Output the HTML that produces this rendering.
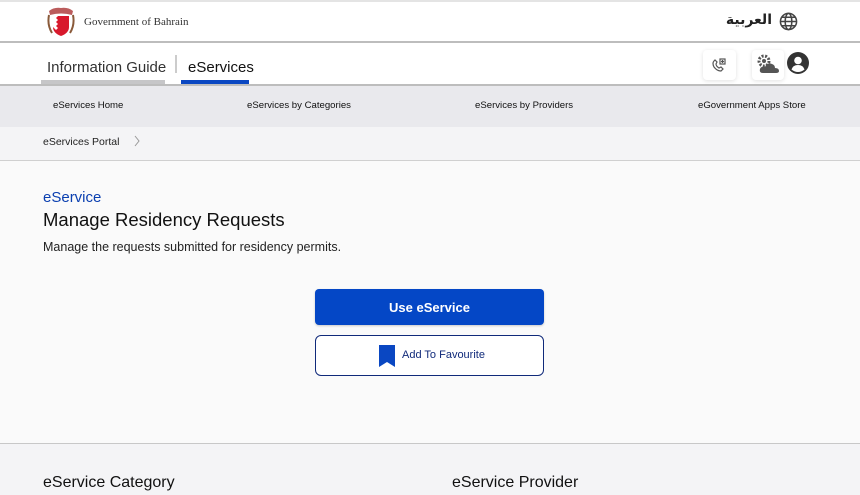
<!DOCTYPE html>
<html><head><meta charset="utf-8"><style>
*{margin:0;padding:0;box-sizing:border-box}
body{width:860px;height:495px;overflow:hidden;font-family:"Liberation Sans",sans-serif;background:#fafafa;position:relative;color:#111}
.a{position:absolute;white-space:nowrap}
</style></head><body>
<div class="a" style="left:0;top:0;width:860px;height:43px;background:#fff;border-top:2px solid #e4e4e4;border-bottom:2px solid #bdbdbd"></div>
<svg class="a" style="left:46px;top:5px" width="30" height="33" viewBox="0 0 30 33">
<path d="M3 6 Q8 2 15 3 Q22 2 27 6 L26 10 Q15 7 4 10Z" fill="#a33" opacity=".8"/>
<path d="M7 11 L23 11 L23 22 Q23 28 15 31 Q7 28 7 22Z" fill="#d8192c"/>
<path d="M7 11 L12 11 L10 13 12 15 10 17 12 19 10 21 12 23 10 25 7 22Z" fill="#fff"/>
<path d="M3 10 Q1 20 6 28 M27 10 Q29 20 24 28" stroke="#8a5a3a" stroke-width="2" fill="none"/>
</svg>
<div class="a" style="left:84px;top:16px;font-family:'Liberation Serif',serif;font-size:11px;color:#333">Government of Bahrain</div>
<div class="a" style="right:88px;top:12px;font-size:14px;font-weight:bold;font-family:'DejaVu Sans',sans-serif;color:#222">العربية</div>
<svg class="a" style="left:779px;top:12px" width="19" height="19" viewBox="0 0 20 20" fill="none" stroke="#444" stroke-width="1.6"><circle cx="10" cy="10" r="8.5"/><ellipse cx="10" cy="10" rx="3.5" ry="8.5"/><path d="M1.5 10h17M3 5.5h14M3 14.5h14"/></svg>
<div class="a" style="left:0;top:43px;width:860px;height:43px;background:#fff;border-bottom:2px solid #bdbdbd"></div>
<div class="a" style="left:47px;top:59px;font-size:15px;color:#333">Information Guide</div>
<div class="a" style="left:41px;top:80px;width:124px;height:4px;background:#c6c6c8"></div>
<div class="a" style="left:175px;top:55px;width:2px;height:18px;background:#ccc"></div>
<div class="a" style="left:188px;top:59px;font-size:15px;color:#111">eServices</div>
<div class="a" style="left:181px;top:80px;width:68px;height:4px;background:#0a47c2"></div>
<div class="a" style="left:703px;top:50px;width:33px;height:30px;background:#fff;border-radius:4px;box-shadow:0 1px 4px rgba(0,0,0,.12)"></div>
<svg class="a" style="left:711px;top:57px" width="16" height="16" viewBox="0 0 16 16" fill="none" stroke="#555" stroke-width="1.2"><path d="M3 4 Q1 6 3 10 Q6 14 10 14 L12 12 10 10 8 11 Q5 9 5 7 L6 5 4 3Z"/><rect x="9" y="2" width="5" height="5"/><path d="M11.5 3v3M10 4.5h3"/></svg>
<div class="a" style="left:752px;top:50px;width:32px;height:30px;background:#fff;border-radius:4px;box-shadow:0 1px 4px rgba(0,0,0,.12)"></div>
<svg class="a" style="left:755px;top:53px" width="26" height="22" viewBox="0 0 26 22"><circle cx="9" cy="8" r="5" fill="none" stroke="#555" stroke-width="3" stroke-dasharray="2 1.5"/><circle cx="9" cy="8" r="2" fill="#555"/><path d="M8 20 Q4 20 5 16 Q6 13 10 14 Q12 9 17 11 Q20 12 20 15 Q24 15 24 18 Q24 20 21 20Z" fill="#555"/></svg>
<svg class="a" style="left:787px;top:52px" width="22" height="22" viewBox="0 0 22 22"><circle cx="11" cy="11" r="11" fill="#333"/><circle cx="11" cy="8.5" r="3.8" fill="#fff"/><path d="M4.5 17.5 Q6 13 11 13 Q16 13 17.5 17.5 Q14.5 20 11 20 Q7.5 20 4.5 17.5Z" fill="#fff"/></svg>
<div class="a" style="left:0;top:86px;width:860px;height:41px;background:#e9e9ed"></div>
<div class="a" style="left:53px;top:100px;font-size:9.6px">eServices Home</div>
<div class="a" style="left:247px;top:100px;font-size:9.6px">eServices by Categories</div>
<div class="a" style="left:475px;top:100px;font-size:9.6px">eServices by Providers</div>
<div class="a" style="left:698px;top:100px;font-size:9.6px">eGovernment Apps Store</div>
<div class="a" style="left:0;top:127px;width:860px;height:34px;background:#f4f4f6;border-bottom:1px solid #d0d0d0"></div>
<div class="a" style="left:43px;top:136px;font-size:10.5px;color:#222">eServices Portal</div>
<svg class="a" style="left:133px;top:135px" width="8" height="12" viewBox="0 0 8 12"><path d="M2 1l4 5-4 5" stroke="#999" fill="none"/></svg>
<div class="a" style="left:43px;top:189px;font-size:15px;color:#0a3fb0">eService</div>
<div class="a" style="left:43px;top:209px;font-size:18.5px;color:#111">Manage Residency Requests</div>
<div class="a" style="left:43px;top:240px;font-size:12.5px;color:#222">Manage the requests submitted for residency permits.</div>
<div class="a" style="left:315px;top:289px;width:229px;height:36px;background:#0447c6;border-radius:4px;color:#fff;font-size:13px;font-weight:bold;text-align:center;line-height:37px;box-shadow:0 1px 2px rgba(0,0,0,.2)">Use eService</div>
<div class="a" style="left:315px;top:335px;width:229px;height:41px;border:1px solid #102a7a;border-radius:6px;background:#fff"></div>
<svg class="a" style="left:379px;top:345px" width="16" height="22" viewBox="0 0 16 22"><path d="M0 0h16v22l-8-5-8 5z" fill="#0a47c2"/></svg>
<div class="a" style="left:402px;top:349px;font-size:11px;color:#102a7a">Add To Favourite</div>
<div class="a" style="left:0;top:443px;width:860px;height:52px;background:#f4f4f6;border-top:1px solid #c8c8c8"></div>
<div class="a" style="left:43px;top:474px;font-size:16px;color:#111">eService Category</div>
<div class="a" style="left:452px;top:474px;font-size:16px;color:#111">eService Provider</div>
</body></html>
